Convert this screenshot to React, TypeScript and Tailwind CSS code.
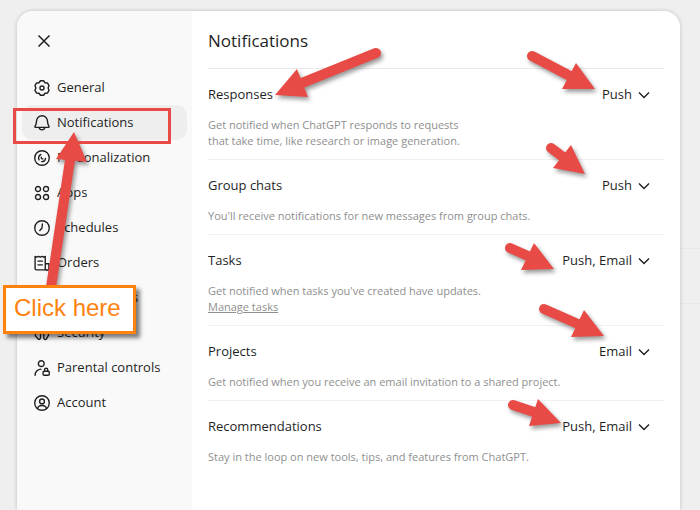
import type { ReactNode } from "react";

const icons: Record<string, ReactNode> = {
  general: (
    <>
      <path d="M9.900 2h4.200l2.050 2.800 3.450.4 2.100 3.650L20.300 12l1.400 3.150-2.100 3.650-3.450.4L14.100 22H9.900l-2.050-2.800-3.450-.4-2.100-3.650L3.700 12 2.300 8.850l2.100-3.650 3.450-.4Z" />
      <circle cx="12" cy="12" r="2.800" />
    </>
  ),
  notifications: (
    <>
      <path d="M12 2a7.500 7.500 0 0 0-7.500 7.200L4 13l-1.600 3.600c-.3.700.1 1.400.9 1.400h17.400c.8 0 1.200-.7.9-1.400L20 13l-.5-3.800A7.500 7.500 0 0 0 12 2Z" />
      <path d="M8 18.500a4.200 4.200 0 0 0 8 0" />
    </>
  ),
  personalization: (
    <>
      <circle cx="12" cy="12" r="10" />
      <path d="M10.500 7.200A5 5 0 0 0 8 14.500M11.500 17A5.200 5.200 0 0 0 16.800 12.500M11 10.800c-.3 1.500.8 2.600 2.300 2.400" />
    </>
  ),
  apps: (
    <>
      <circle cx="6.500" cy="6.500" r="3.500" />
      <circle cx="17.500" cy="6.500" r="3.500" />
      <circle cx="6.500" cy="17.500" r="3.500" />
      <circle cx="17.500" cy="17.500" r="3.500" />
    </>
  ),
  schedules: (
    <>
      <circle cx="12" cy="12" r="10" />
      <path d="M12.500 6.500 12 12l-3 3.500" />
    </>
  ),
  orders: (
    <path d="M18.500 21.500H4.500a2 2 0 0 1-2-2V3l2.400 1 2.400-1 2.300 1 2.400-1 2.400 1L16.500 3v16.500a2.500 2.500 0 0 0 5 0V13h-5M6.500 9.500h6M6.500 14.500h6" />
  ),
  data: (
    <>
      <ellipse cx="12" cy="5" rx="8" ry="3" />
      <path d="M4 5v14c0 4 16 4 16 0V5M4 12c0 4 16 4 16 0" />
    </>
  ),
  security: (
    <path d="M3 4v12l4 4.500a2.300 2.300 0 0 0 3-2.500V9M21 4v11l-3 5.500a2.300 2.300 0 0 1-3.500-2.500V9" />
  ),
  parental: (
    <>
      <circle cx="11" cy="6" r="4" />
      <path d="M2.500 22c.3-5 3-8 8-8.500" />
      <rect x="13.500" y="16.500" width="8.500" height="5.500" rx="1.500" />
      <path d="M15.500 16.500v-2a2.200 2.200 0 0 1 4.400 0v2" />
    </>
  ),
  account: (
    <>
      <circle cx="12" cy="12" r="10" />
      <circle cx="12" cy="9.800" r="3.300" />
      <path d="M6 19.500c1-5.500 11-5.500 12 0" />
    </>
  ),
};

const navItems = [
  { id: "general", label: "General" },
  { id: "notifications", label: "Notifications" },
  { id: "personalization", label: "Personalization" },
  { id: "apps", label: "Apps" },
  { id: "schedules", label: "Schedules" },
  { id: "orders", label: "Orders" },
  { id: "data", label: "Data controls" },
  { id: "security", label: "Security" },
  { id: "parental", label: "Parental controls" },
  { id: "account", label: "Account" },
];

const settings = [
  {
    id: "responses",
    title: "Responses",
    value: "Push",
    text: (
      <>
        Get notified when ChatGPT responds to requests
        <br />
        that take time, like research or image generation.
      </>
    ),
  },
  {
    id: "group-chats",
    title: "Group chats",
    value: "Push",
    text: "You'll receive notifications for new messages from group chats.",
  },
  {
    id: "tasks",
    title: "Tasks",
    value: "Push, Email",
    text: (
      <>
        Get notified when tasks you've created have updates.
        <br />
        <a href="#tasks" className="underline">
          Manage tasks
        </a>
      </>
    ),
  },
  {
    id: "projects",
    title: "Projects",
    value: "Email",
    text: "Get notified when you receive an email invitation to a shared project.",
  },
  {
    id: "recommendations",
    title: "Recommendations",
    value: "Push, Email",
    text: "Stay in the loop on new tools, tips, and features from ChatGPT.",
  },
];

function NavIcon({ id }: { id: string }) {
  return (
    <svg
      viewBox="1 1 22 22"
      className="size-4 shrink-0"
      fill="none"
      stroke="currentColor"
      strokeWidth="1.900"
      strokeLinejoin="round"
      strokeLinecap="round"
      aria-hidden="true"
    >
      {icons[id]}
    </svg>
  );
}

function Sidebar() {
  return (
    <aside className="w-[175px] shrink-0 bg-[#f9f9f9] px-[5px] pt-3">
      <button type="button" aria-label="Close" className="flex size-9 items-center justify-center pl-2">
        <svg viewBox="0 0 12 12" className="size-3" fill="none" stroke="currentColor" strokeWidth="1.500" aria-hidden="true">
          <path d="m.5.5 11 11M11.500.5l-11 11" />
        </svg>
      </button>
      <nav className="mt-[11px] flex flex-col">
        {navItems.map((item) => (
          <button
            key={item.id}
            type="button"
            aria-current={item.id === "notifications" ? "page" : undefined}
            className="flex h-[35px] items-center gap-[7px] rounded-[10px] px-3 text-left text-[13px] whitespace-nowrap aria-[current=page]:bg-[#eeeeee]"
          >
            <NavIcon id={item.id} />
            {item.label}
          </button>
        ))}
      </nav>
    </aside>
  );
}

function Channel({ id, value }: { id: string; value: string }) {
  return (
    <span className="relative flex items-center">
      <select
        id={id}
        defaultValue={value}
        className="field-sizing-content h-5 appearance-none bg-transparent pr-8 text-right text-[13px]"
      >
        <option>Push</option>
        <option>Email</option>
        <option>Push, Email</option>
      </select>
      <svg
        viewBox="0 0 12 12"
        className="pointer-events-none absolute right-[14px] size-3"
        fill="none"
        stroke="currentColor"
        strokeWidth="1.400"
        aria-hidden="true"
      >
        <path d="m1 3.500 5 5 5-5" />
      </svg>
    </span>
  );
}

const arrows = [
  { tail: [376, 53], neck: [302, 83], head: "275,95 297,69 308,97" },
  { tail: [532, 56], neck: [570, 76], head: "595,89 576,63 562,89" },
  { tail: [551, 148], neck: [563, 157], head: "585,174 571,145 553,168" },
  { tail: [510, 248], neck: [528, 256], head: "554,269 534,243 521,270" },
  { tail: [544, 309], neck: [578, 324], head: "604,336 584,310 571,337" },
  { tail: [513, 405], neck: [534, 412], head: "561,423 538,399 529,426" },
  { tail: [50, 294], neck: [70, 160], head: "74,132 56,159 87,162" },
];

function Annotations() {
  return (
    <div className="pointer-events-none absolute top-0 left-0">
      <div className="absolute top-[108px] left-[13px] h-9 w-[158px] border-3 border-[#e84b46]" />
      <svg width="700" height="510" viewBox="0 0 700 510" className="max-w-none" aria-hidden="true">
        <g className="drop-shadow-[2px_3px_2px_rgba(0,0,0,0.4)]" fill="#e84b46" stroke="#e84b46">
          {arrows.map((a) => (
            <g key={a.head}>
              <line x1={a.tail[0]} y1={a.tail[1]} x2={a.neck[0]} y2={a.neck[1]} strokeWidth="10" strokeLinecap="round" />
              <polygon points={a.head} stroke="none" />
            </g>
          ))}
        </g>
      </svg>
      <div className="absolute top-[285px] left-[3px] border-3 border-[#ff820f] bg-white pt-0.5 pr-3 pb-[5px] pl-2 font-['Liberation_Sans',Arial,sans-serif] text-2xl leading-9 whitespace-nowrap text-[#ff820f] shadow-[4px_4px_4px_rgba(0,0,0,0.5)]">
        Click here
      </div>
    </div>
  );
}

export default function App() {
  return (
    <div className="relative flex h-screen flex-col overflow-hidden bg-[#efefef] pt-[11px] pr-5 pl-[17px] font-['Open_Sans','Noto_Sans',sans-serif] text-[#1f1f1f]">
      <div className="absolute top-[248px] right-0 h-14 w-10 border-y border-[#e8e8e8]" />
      <div className="relative flex min-h-0 flex-1 overflow-hidden rounded-t-2xl bg-white shadow-[0_0_4px_rgba(0,0,0,0.2)]">
        <Sidebar />
        <main className="min-w-0 flex-1 px-4">
          <h1 className="border-b border-[#e9e9e9] pt-4 pb-[13px] text-[17px] leading-7">Notifications</h1>
          {settings.map((s) => (
            <section key={s.id} className="border-b border-[#f0f0f0] pt-4 pb-[10px] last:border-b-0">
              <div className="flex h-5 items-center justify-between text-[13px]">
                <label htmlFor={s.id}>{s.title}</label>
                <Channel id={s.id} value={s.value} />
              </div>
              <p className="mt-3 text-[11px] leading-4 text-[#8f8f8f]">{s.text}</p>
            </section>
          ))}
        </main>
      </div>
      <Annotations />
    </div>
  );
}
